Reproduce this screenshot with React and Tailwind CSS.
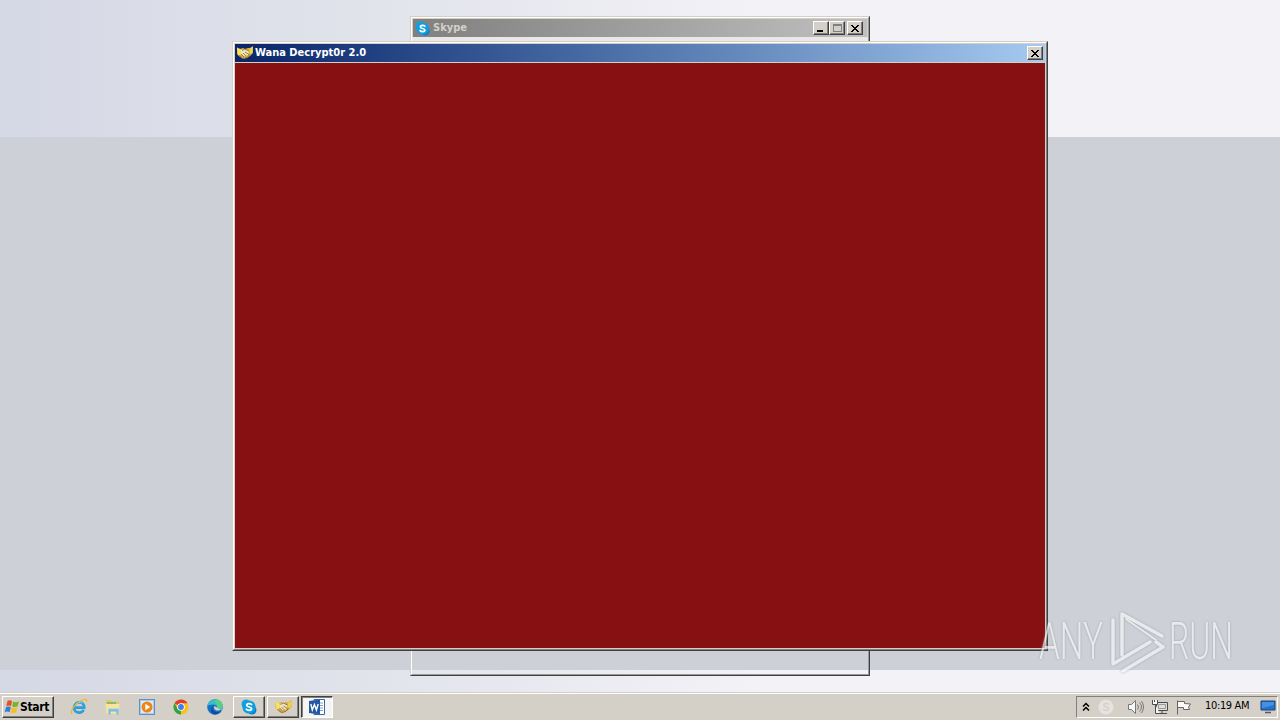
const SkypeLogo = ({ className }) => (
  <svg viewBox="0 0 16 16" className={className}>
    <circle cx="5" cy="5" r="4.5" fill="#1b9de2" />
    <circle cx="11" cy="11" r="4.5" fill="#0a7fd0" />
    <circle cx="8" cy="8" r="6.6" fill="#0e9fe0" />
    <path
      d="M10.6 5.6C9.8 4.4 5.7 4 5.7 6.3c0 2.2 4.9 1.2 4.9 3.4 0 2.2-4.3 2-5.3.4"
      fill="none"
      stroke="#fff"
      strokeWidth="1.7"
      strokeLinecap="round"
    />
  </svg>
);

const Handshake = ({ className }) => (
  <svg viewBox="0 0 16 14" className={className}>
    <path d="M0 2l3 1 3-1 2 1 3-1 2 0 3-2v7l-3 3-3 2-4 1-3-2-3-3z" fill="#d8b04a" />
    <path d="M0 1.5l4 2v5L1 9.5z" fill="#f7e35a" />
    <path d="M16 1l-3.5 2 .5 5 2-1z" fill="#f3d63c" />
    <path d="M4 4l4-1 4 2.5-1 3.5-4 1.5-3-2.500z" fill="#efe3bd" />
    <path
      d="M4 8l3 3M6 7l3 3M8 6l4 2.500M5 4.500L8 3l4 2M2 9.500l4 3 4-1 3-3"
      fill="none"
      stroke="#7c5a1b"
      strokeWidth=".7"
    />
  </svg>
);

const WindowsFlag = () => (
  <svg viewBox="0 0 16 16" className="size-4">
    <path d="M3.500 2C5 1 6.500 1.200 8 2L7 7.200C5.400 6.400 4 6.400 2.200 7.200z" fill="#e8501f" />
    <path d="M9 2.500c2 1 4 .8 6-.3l-1.300 5c-1.900 1.100-3.600 1-5.500.2z" fill="#77b52d" />
    <path d="M2 8.200c1.800-.9 3.200-.8 4.800 0l-1.200 5C4 12.300 2.500 12.300.7 13.200z" fill="#2f7fd6" />
    <path d="M7.900 8.500c2 .8 3.700.8 5.600-.2l-1.300 5c-1.800 1-3.600 1-5.500.1z" fill="#f8bd22" />
  </svg>
);

const IeIcon = () => (
  <svg viewBox="0 0 18 18" className="size-[18px]">
    <path
      d="M4 9.600h10.200C14.300 3 5 2.700 4.100 9c-.6 6.200 7.300 7.300 9.600 2.900"
      fill="none"
      stroke="#2e9fdd"
      strokeWidth="2.700"
    />
    <path d="M5 7.500C6 4.500 10 3.400 12.300 5.500" fill="none" stroke="#8bd6f6" strokeWidth="1" />
    <path
      d="M2 16c-2.500-3 3-10 8.500-13C14 1 17.500.5 16.500 4"
      fill="none"
      stroke="#edb92e"
      strokeWidth="1.300"
    />
  </svg>
);

const ExplorerIcon = () => (
  <svg viewBox="0 0 18 18" className="size-[18px]">
    <path d="M2 2h5l1 1.500h7V14H2z" fill="#e9c75f" />
    <path d="M3 4h9v3H3z" fill="#7fbe73" />
    <path d="M1.500 6h14l-1 9.500h-12z" fill="#f8e59b" />
    <path d="M4.500 16.500v-6h10v6h-2v-3h-6v3z" fill="#79bbdf" />
    <path d="M5 10.800h9" stroke="#b9e2f4" />
  </svg>
);

const MediaIcon = () => (
  <svg viewBox="0 0 18 18" className="size-[18px]">
    <rect x="1.500" y="1.500" width="15" height="15" fill="#a7cbed" stroke="#5d92c6" />
    <rect x="3" y="3" width="12" height="12" fill="#dceafa" />
    <circle cx="9" cy="9" r="5.500" fill="#f28314" />
    <path d="M7.300 5.800v6.400L12.300 9z" fill="#fff" />
  </svg>
);

const ChromeIcon = () => (
  <svg viewBox="0 0 18 18" className="size-[18px]">
    <circle cx="9" cy="9" r="7.500" fill="#fbc116" />
    <path d="M9 9L2.500 5.250A7.500 7.500 0 0 1 15.500 5.250H9z" fill="#e33b2e" />
    <path d="M9 9l-.1 7.500A7.500 7.500 0 0 1 2.500 5.250L5.800 11z" fill="#2da14c" />
    <circle cx="9" cy="9" r="3.800" fill="#fff" />
    <circle cx="9" cy="9" r="2.900" fill="#3c7fe8" />
  </svg>
);

const EdgeIcon = () => (
  <svg viewBox="0 0 18 18" className="size-[18px]">
    <circle cx="9" cy="9" r="7.800" fill="#1670c8" />
    <path d="M1.300 8C2.500-.8 15.500-.8 16.800 8c.2 4-5 4.500-6.300 2.800 1.500-2-.5-4.500-3.300-4.300C4 6.500 2 7.500 1.300 8z" fill="#35c0c9" />
    <path d="M10 1.200c5.500.5 8.500 6.500 5.800 9-2 1.400-4.500 1-5.300.4 2.300-2 .5-5-2-6z" fill="#58cf83" />
    <path d="M7 8c-2 5 3 7.500 7.500 5-1 1.800-3 3.200-5.500 3.500C4.500 16 4 10.500 7 8z" fill="#0d4d9f" />
    <path d="M8.500 8c-1.500 2.500 1 5 4.500 4.500l3.500-1.500-.8 1.500" fill="#d4d0c8" />
  </svg>
);

const WordIcon = () => (
  <svg viewBox="0 0 18 18" className="size-[18px]">
    <path d="M6 1.500h10.500v15H6z" fill="#fff" stroke="#3769a9" />
    <path d="M11 5h4M11 7.500h4M11 10h4M11 12.500h4" stroke="#7ca3d3" />
    <path d="M1 3l11-1.500v15L1 15z" fill="#2458a4" />
    <path d="M2.800 6l1.500 6L6.400 6.500 8.400 12 10.200 6" fill="none" stroke="#fff" strokeWidth="1.400" />
  </svg>
);

const CloseGlyph = () => (
  <svg viewBox="0 0 8 7" className="h-[7px] w-2" shapeRendering="crispEdges">
    <path d="M0 0h2v1h1v1h2V1h1V0h2v1H7v1H6v1H5v1h1v1h1v1h1v1H6V6H5V5H3v1H2v1H0V6h1V5h1V4h1V3H2V2H1V1H0z" fill="#000" />
  </svg>
);

const CaptionButton = ({ children }) => (
  <button className="flex h-[14px] w-4 items-center justify-center border border-t-white border-r-[#404040] border-b-[#404040] border-l-white bg-[#d4d0c8] shadow-[inset_-1px_-1px_0_#808080]">
    {children}
  </button>
);

const TaskButton = ({ active, children }) =>
  active ? (
    <button className="flex h-[22px] w-8 items-center justify-center border border-t-[#404040] border-r-white border-b-white border-l-[#404040] bg-[#f6f5f3] shadow-[inset_1px_1px_0_#808080]">
      {children}
    </button>
  ) : (
    <button className="flex h-[22px] w-8 items-center justify-center border border-t-white border-r-[#404040] border-b-[#404040] border-l-white bg-[#d4d0c8] shadow-[inset_-1px_-1px_0_#808080]">
      {children}
    </button>
  );

const SkypeWindow = () => (
  <div className="absolute top-4 left-[410px] flex h-[660px] w-[460px] flex-col border border-t-[#d4d0c8] border-r-[#404040] border-b-[#404040] border-l-[#d4d0c8]">
    <div className="flex flex-1 flex-col border border-t-white border-r-[#9a9a98] border-b-[#9a9a98] border-l-white">
      <div className="border border-b-0 border-[#d4d0c8]">
        <div className="flex h-[18px] items-center bg-linear-to-r from-[#808080] to-[#c0c0c0] pr-1 pl-[2px]">
          <SkypeLogo className="size-[15px]" />
          <span className="ml-[3px] flex-1 text-[11px] font-bold text-[#d4d0c8]">Skype</span>
          <CaptionButton>
            <span className="mt-[6px] mr-[2px] h-[2px] w-[6px] bg-black"></span>
          </CaptionButton>
          <CaptionButton>
            <span className="h-2 w-[9px] border border-t-2 border-[#808080]"></span>
          </CaptionButton>
          <span className="w-[2px]"></span>
          <CaptionButton>
            <CloseGlyph />
          </CaptionButton>
        </div>
      </div>
      <div className="h-1 bg-[#e9e8e6]"></div>
    </div>
  </div>
);

const DecryptorWindow = () => (
  <div className="absolute top-[41px] left-[232px] flex h-[610px] w-[816px] flex-col border border-t-[#d4d0c8] border-r-[#404040] border-b-[#404040] border-l-[#d4d0c8]">
    <div className="flex flex-1 flex-col border border-t-white border-r-[#808080] border-b-[#808080] border-l-white bg-[#d4d0c8] p-px pt-0">
      <div className="mt-px flex h-[18px] items-center bg-linear-to-r from-[#0a246a] to-[#a6caf0] pr-[2px] pl-[2px]">
        <Handshake className="h-[14px] w-4" />
        <span className="ml-[2px] flex-1 text-[11px] font-bold text-white">Wana Decrypt0r 2.0</span>
        <CaptionButton>
          <CloseGlyph />
        </CaptionButton>
      </div>
      <div className="mt-px flex-1 bg-[#861012]"></div>
    </div>
  </div>
);

const Watermark = () => (
  <svg
    viewBox="0 0 210 76"
    className="absolute top-[602px] left-[1032px] h-[76px] w-[210px] opacity-70 drop-shadow-[0_0_1px_#8b8f94]"
    fontFamily="Roboto, sans-serif"
    fontSize="51"
    fontWeight="300"
    fill="#f4f5f7"
  >
    <text x="7" y="57" textLength="64" lengthAdjust="spacingAndGlyphs">ANY</text>
    <text x="137" y="57" textLength="64" lengthAdjust="spacingAndGlyphs">RUN</text>
    <g fill="none" stroke="#f4f5f7" strokeWidth="3.500" strokeLinecap="round" strokeLinejoin="round">
      <path d="M90 53V12l40 22" />
      <path d="M94 17l30 21" strokeWidth="2" />
      <path d="M81 18V62L118 40" />
      <path d="M91 69L131 45 124 40" />
    </g>
  </svg>
);

const Taskbar = () => (
  <div className="absolute inset-x-0 bottom-0 flex h-7 items-center border-t border-[#d4d0c8] bg-[#d4d0c8] pr-[2px] pl-[2px] shadow-[inset_0_1px_0_#fff]">
    <button className="flex h-[22px] w-[52px] items-center border border-t-white border-r-[#404040] border-b-[#404040] border-l-white pl-px shadow-[inset_-1px_-1px_0_#808080]">
      <WindowsFlag />
      <span className="text-[12px] font-bold tracking-[-0.3px]">Start</span>
    </button>
    <div className="ml-4 flex gap-4">
      <IeIcon />
      <ExplorerIcon />
      <MediaIcon />
      <ChromeIcon />
      <EdgeIcon />
    </div>
    <div className="ml-[9px] flex gap-[2px]">
      <TaskButton>
        <SkypeLogo className="size-4" />
      </TaskButton>
      <TaskButton>
        <Handshake className="h-[14px] w-[17px]" />
      </TaskButton>
      <TaskButton active>
        <WordIcon />
      </TaskButton>
    </div>
    <div className="ml-auto flex h-[22px] w-[202px] items-center border border-t-[#808080] border-r-white border-b-white border-l-[#808080] pl-[5px]">
      <svg viewBox="0 0 8 10" className="h-[10px] w-2" fill="none" stroke="#000" strokeWidth="1.500">
        <path d="M1 4.500L4 1.500l3 3M1 8.500l3-3 3 3" />
      </svg>
      <svg viewBox="0 0 16 16" className="ml-2 size-4">
        <circle cx="8" cy="8" r="7.500" fill="#e5e3df" />
        <path d="M10.500 5.500C9.500 4 5.700 4 5.700 6.300c0 2.200 4.900 1.200 4.900 3.400 0 2.200-4.300 2-5.300.4" fill="none" stroke="#d4d0c8" strokeWidth="1.500" />
      </svg>
      <svg viewBox="0 0 18 16" className="ml-[13px] h-4 w-[18px]" fill="none" stroke="#777">
        <path d="M1.500 5.500h3l4-4v13l-4-4h-3z" fill="#f8f8f8" />
        <path d="M10.500 5.500q2 2.500 0 5M12.500 3.500q4 4.500 0 9M14.500 2q4 6 0 12" />
      </svg>
      <svg viewBox="0 0 18 16" className="ml-[6px] h-4 w-[18px]" fill="none" stroke="#4c4c4c">
        <path d="M5.500 3.500h11v8h-11z" fill="#dedede" />
        <path d="M7.500 5.500h7v4h-7z" stroke="#999" />
        <path d="M8 14.500h8M11 12v2" />
        <path d="M1.500 1v4.500h5V1M3.500 1v2M4.500 5.500v9h4" fill="#f6f6f6" />
      </svg>
      <svg viewBox="0 0 17 16" className="ml-[6px] h-4 w-[17px]" fill="#fafafa" stroke="#666">
        <path d="M2.500 15.500v-14M2.500 2.500h7v2l6 .5-2 3 1 2.500h-6v-2h-6z" />
      </svg>
      <span className="ml-[13px] text-[11px] tracking-[-0.35px] whitespace-nowrap [font-family:'DejaVu_Sans_Condensed','DejaVu_Sans',sans-serif]">
        10:19 AM
      </span>
      <svg viewBox="0 0 16 14" className="mr-px ml-auto h-[14px] w-4">
        <path d="M1 1h14v9H1z" fill="#2672cc" stroke="#193f7b" />
        <path d="M2 2h12v3L2 8z" fill="#4591e0" />
        <path d="M5 12.500h6" stroke="#535b68" strokeWidth="1.500" />
      </svg>
    </div>
  </div>
);

const App = () => {
  return (
    <div className="relative h-screen w-screen overflow-hidden bg-linear-to-r from-[#d5d8e5] via-[#e2e4ec] via-30% to-[#f3f2f7] to-60% pt-[137px] text-black [font-family:'DejaVu_Sans_Condensed','DejaVu_Sans',sans-serif]">
      <div className="h-[533px] bg-[#cdd1d7]"></div>
      <SkypeWindow />
      <DecryptorWindow />
      <Watermark />
      <Taskbar />
    </div>
  );
};

export default App;
